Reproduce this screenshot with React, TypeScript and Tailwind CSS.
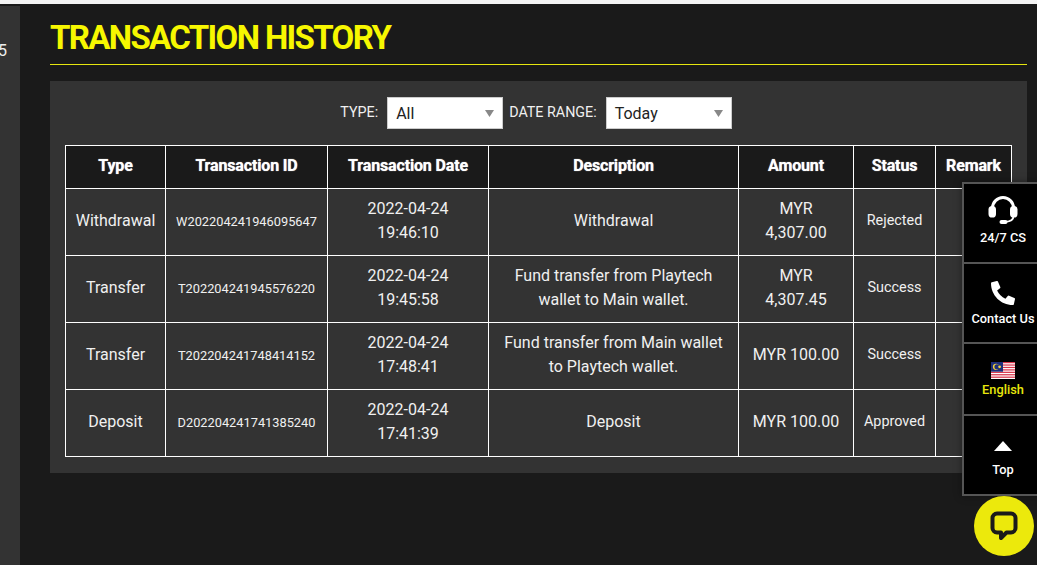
import React from "react";
import { FaPhoneAlt } from "react-icons/fa";

const rows = [
  { type: "Withdrawal", id: "W202204241946095647", date: ["2022-04-24", "19:46:10"], desc: ["Withdrawal"], amount: ["MYR", "4,307.00"], status: "Rejected" },
  { type: "Transfer", id: "T202204241945576220", date: ["2022-04-24", "19:45:58"], desc: ["Fund transfer from Playtech", "wallet to Main wallet."], amount: ["MYR", "4,307.45"], status: "Success" },
  { type: "Transfer", id: "T202204241748414152", date: ["2022-04-24", "17:48:41"], desc: ["Fund transfer from Main wallet", "to Playtech wallet."], amount: ["MYR 100.00"], status: "Success" },
  { type: "Deposit", id: "D202204241741385240", date: ["2022-04-24", "17:41:39"], desc: ["Deposit"], amount: ["MYR 100.00"], status: "Approved" },
];

const Lines = ({ items }: { items: string[] }) => (
  <>
    {items.map((t) => (
      <div key={t}>{t}</div>
    ))}
  </>
);

const Select = ({ value, w }: { value: string; w: string }) => (
  <div className={`${w} h-8 bg-white border border-[#ccc] flex items-center justify-between pl-2 pr-[8px] text-[16px] text-[#222]`}>
    <span className="pt-[2px]">{value}</span>
    <svg width="9" height="7" viewBox="0 0 9 7"><path d="M0 0h9L4.5 7z" fill="#888" /></svg>
  </div>
);

const th = "border border-white font-bold text-[16px] tracking-[-0.15px] text-white bg-[#1a1a1a] text-center align-middle p-0 pb-[2px] [text-shadow:0_0_1px_#ddd]";
const td = "border border-white text-center align-middle p-0 text-[#f0f0f0]";
const tdUp = "pb-[2px]";

function Flag() {
  return (
    <svg width="24" height="17" viewBox="0 0 24 17" className="block">
      <rect width="24" height="17" fill="#fff" />
      {[0, 2.43, 4.86, 7.29, 9.72, 12.15, 14.58].map((y) => (
        <rect key={y} y={y} width="24" height="1.22" fill="#d8344a" />
      ))}
      <rect width="12" height="9.7" fill="#1d2f7a" />
      <circle cx="5" cy="4.85" r="3.1" fill="#f5d33a" />
      <circle cx="6" cy="4.85" r="2.6" fill="#1d2f7a" />
      <circle cx="8.6" cy="4.85" r="1.4" fill="#f5d33a" />
    </svg>
  );
}

function Headset() {
  return (
    <svg width="30" height="30" viewBox="0 0 30 30" fill="none" className="block">
      <path d="M4.5 15V13a10.5 10.5 0 0 1 21 0v2" stroke="#fff" strokeWidth="3" />
      <rect x="0.5" y="11" width="7.5" height="11.5" rx="3.6" fill="#fff" />
      <rect x="22" y="11" width="7.5" height="11.5" rx="3.6" fill="#fff" />
      <path d="M25.5 21c0 4-3 5.5-8 5.8" stroke="#fff" strokeWidth="1.8" />
      <rect x="11.5" y="25" width="8" height="4" rx="2" fill="#fff" />
    </svg>
  );
}

export default function App() {
  return (
    <div className="relative w-[1037px] h-[565px] overflow-hidden bg-[#1a1a1a] font-['Roboto',sans-serif] border-t-[4px] border-[#f4f4f4]">
      <div className="flex h-[561px] pt-[2px]">
        <div className="w-5 shrink-0 bg-[#333] text-[#eee] text-[16px] leading-[16px] pt-[37px] -indent-[2px]">5</div>
        <main className="w-[977px] ml-[30px] shrink-0">
          <h1 className="h-[59px] border-b border-[#e5e50f] text-[33px] leading-[64px] font-bold text-[#f7f700] tracking-[-1.65px]">
            TRANSACTION HISTORY
          </h1>
          <section className="mt-4 h-[392px] bg-[#333] pt-4 px-[15px]">
            <div className="flex items-center justify-center h-8 pr-[5px] text-[14.3px] text-[#f0f0f0]">
              <span className="mr-[9px] -mt-[1px]">TYPE:</span>
              <Select value="All" w="w-[116px]" />
              <span className="ml-[6px] mr-[9px] -mt-[1px]">DATE RANGE:</span>
              <Select value="Today" w="w-[126px]" />
            </div>
            <table className="mt-4 w-[946px] table-fixed border-collapse text-[16px] leading-6">
              <colgroup>
                <col className="w-[100px]" />
                <col className="w-[162px]" />
                <col className="w-[161px]" />
                <col className="w-[250px]" />
                <col className="w-[115px]" />
                <col className="w-[82px]" />
                <col className="w-[76px]" />
              </colgroup>
              <thead>
                <tr className="h-[43px]">
                  {["Type", "Transaction ID", "Transaction Date", "Description", "Amount", "Status", "Remark"].map((h) => (
                    <th key={h} className={th}>{h}</th>
                  ))}
                </tr>
              </thead>
              <tbody>
                {rows.map((r) => (
                  <tr key={r.id} className="h-[67px]">
                    <td className={`${td} ${tdUp}`}>{r.type}</td>
                    <td className={`${td} text-[12.8px]`}>{r.id}</td>
                    <td className={`${td} ${tdUp}`}><Lines items={r.date} /></td>
                    <td className={`${td} ${tdUp}`}><Lines items={r.desc} /></td>
                    <td className={`${td} ${tdUp}`}><Lines items={r.amount} /></td>
                    <td className={`${td} ${tdUp} text-[14.4px]`}>{r.status}</td>
                    <td className={td}></td>
                  </tr>
                ))}
              </tbody>
            </table>
          </section>
        </main>
      </div>

      <aside className="absolute left-[962px] top-[178px] w-[80px] border-2 border-r-0 border-[#555] bg-black text-white text-[12.8px] font-medium flex flex-col items-center shadow-[0_0_8px_rgba(0,0,0,0.4)]">
        <div className="h-[80px] w-full border-b-2 border-[#555] flex flex-col items-center pt-[11px]">
          <Headset />
          <span className="mt-[5px] leading-[16px]">24/7 CS</span>
        </div>
        <div className="h-[80px] w-full border-b-2 border-[#555] flex flex-col items-center pt-[17px]">
          <FaPhoneAlt size={24} className="text-white" />
          <span className="mt-[6px] leading-[16px] whitespace-nowrap">Contact Us</span>
        </div>
        <div className="h-[72px] w-full border-b-2 border-[#555] flex flex-col items-center pt-[18px]">
          <Flag />
          <span className="mt-[3px] leading-[16px] text-[#e8e80c]">English</span>
        </div>
        <div className="h-[78px] w-full flex flex-col items-center pt-[25px]">
          <svg width="18" height="10" viewBox="0 0 18 10"><path d="M9 0l9 10H0z" fill="#fff" /></svg>
          <span className="mt-[11px] leading-[16px]">Top</span>
        </div>
      </aside>

      <div className="absolute left-[974px] top-[492px] w-[60px] h-[60px] rounded-full bg-[#ece90c] flex items-center justify-center">
        <svg width="28" height="30" viewBox="0 0 28 30" fill="none">
          <path d="M7 2.5h14a4.5 4.5 0 0 1 4.5 4.5v10a4.5 4.5 0 0 1-4.5 4.5h-4.5L11 27v-5.5H7A4.5 4.5 0 0 1 2.5 17V7A4.5 4.5 0 0 1 7 2.5z" stroke="#1a1a1a" strokeWidth="4" strokeLinejoin="round" />
        </svg>
      </div>
    </div>
  );
}
